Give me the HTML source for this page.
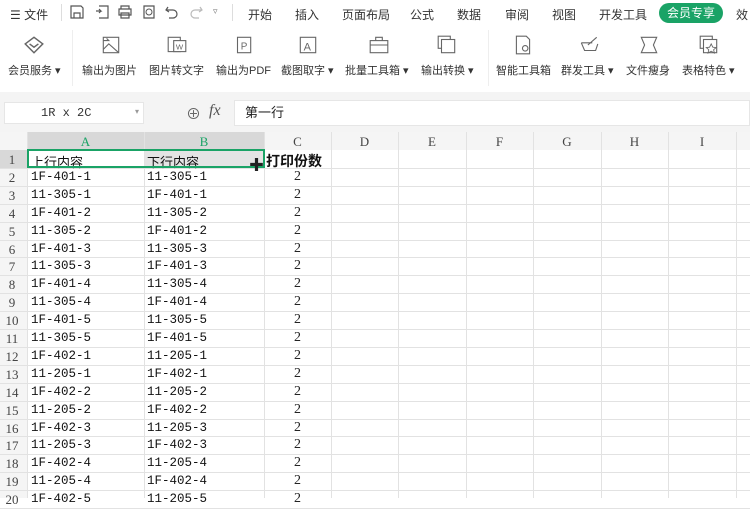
<!DOCTYPE html><html><head><meta charset="utf-8"><style>
*{margin:0;padding:0;box-sizing:border-box}
body{width:750px;height:498px;overflow:hidden;background:#fff;font-family:"Liberation Sans","Noto Sans CJK SC",sans-serif;position:relative;color:#333}
.a{position:absolute;white-space:nowrap}
.m{font-size:12px;top:6px;color:#333}
.t{font-size:11px;top:62px;color:#333}
.ic{position:absolute;top:34px;width:22px;height:22px}
.cell{font-family:"Liberation Mono","Noto Sans CJK SC",monospace;font-size:12.5px;color:#111}
.cz{font-family:"Liberation Sans","Noto Sans CJK SC",sans-serif;font-size:13px;color:#111}
.rn{font-family:"Liberation Serif",serif;font-size:13px;color:#444;width:24px;text-align:center;left:0}
.vl{position:absolute;top:132px;bottom:0;width:1px;background:#e2e2e2}
.hl{position:absolute;left:0;width:750px;height:1px;background:#e2e2e2}
.ch{position:absolute;top:134px;font-family:"Liberation Serif",serif;font-size:13px;color:#444;text-align:center}
.qa{position:absolute;top:4px;width:16px;height:16px}
</style></head><body>
<div class="a m" style="left:10px">☰ 文件</div>
<div class="a" style="left:61px;top:4px;width:1px;height:17px;background:#ddd"></div>
<svg class="qa" style="left:69px" viewBox="0 0 16 16"><path d="M2 2h10l2 2v10H2z M5 14V9h6v5" fill="none" stroke="#555" stroke-width="1.2"/></svg>
<svg class="qa" style="left:94px" viewBox="0 0 16 16"><path d="M5 2h9v12H5M2 7h5l-2-2M7 7l-2 2" fill="none" stroke="#555" stroke-width="1.2"/></svg>
<svg class="qa" style="left:117px" viewBox="0 0 16 16"><path d="M4 5V2h8v3M2 5h12v6H2zM4 9h8v5H4z" fill="none" stroke="#555" stroke-width="1.2"/></svg>
<svg class="qa" style="left:141px" viewBox="0 0 16 16"><path d="M3 2h10v12H3z" fill="none" stroke="#555" stroke-width="1.2"/><circle cx="8" cy="8" r="3" fill="none" stroke="#555"/></svg>
<svg class="qa" style="left:164px" viewBox="0 0 16 16"><path d="M4 3L2 6l3 2M2 6h7a4 4 0 010 8H5" fill="none" stroke="#555" stroke-width="1.2"/></svg>
<svg class="qa" style="left:188px" viewBox="0 0 16 16"><path d="M12 3l2 3-3 2M14 6H7a4 4 0 000 8h4" fill="none" stroke="#bbb" stroke-width="1.2"/></svg>
<div class="a" style="left:213px;top:6px;font-size:9px;color:#777">▿</div>
<div class="a" style="left:232px;top:4px;width:1px;height:17px;background:#ddd"></div>
<div class="a m" style="left:248px">开始</div><div class="a m" style="left:295px">插入</div><div class="a m" style="left:342px">页面布局</div><div class="a m" style="left:410px">公式</div><div class="a m" style="left:457px">数据</div><div class="a m" style="left:505px">审阅</div><div class="a m" style="left:552px">视图</div><div class="a m" style="left:599px">开发工具</div>
<div class="a" style="left:659px;top:3px;width:64px;height:20px;border-radius:10px;background:#1aa366;color:#fff;font-size:12px;text-align:center;line-height:20px">会员专享</div>
<div class="a m" style="left:736px">效</div>
<svg class="ic" style="left:23px" viewBox="0 0 20 20"><path d="M2 9l8-6 8 6-8 8z" fill="none" stroke="#666" stroke-width="1.3"/><path d="M6 9l4 3 4-3" fill="none" stroke="#666" stroke-width="1.3"/></svg>
<div class="a" style="left:72px;top:30px;width:1px;height:56px;background:#eee"></div>
<svg class="ic" style="left:100px" viewBox="0 0 20 20"><rect x="3" y="3" width="14" height="14" fill="none" stroke="#666"/><path d="M3 14l5-5 9 8M3 6h5l-2-2" fill="none" stroke="#666"/></svg>
<svg class="ic" style="left:166px" viewBox="0 0 20 20"><rect x="2" y="3" width="11" height="13" fill="none" stroke="#666"/><rect x="7" y="6" width="11" height="10" fill="#fff" stroke="#666"/><text x="9" y="14" font-size="7" fill="#666">W</text></svg>
<svg class="ic" style="left:232px" viewBox="0 0 20 20"><rect x="5" y="3" width="12" height="14" fill="none" stroke="#666"/><text x="8" y="14" font-size="9" fill="#666">P</text></svg>
<svg class="ic" style="left:297px" viewBox="0 0 20 20"><rect x="3" y="3" width="14" height="14" fill="none" stroke="#666"/><text x="6" y="15" font-size="10" fill="#666">A</text></svg>
<svg class="ic" style="left:368px" viewBox="0 0 20 20"><rect x="2" y="6" width="16" height="11" fill="none" stroke="#666"/><path d="M7 6V3h6v3M2 10h16" fill="none" stroke="#666"/></svg>
<svg class="ic" style="left:436px" viewBox="0 0 20 20"><rect x="2" y="2" width="11" height="11" fill="none" stroke="#666"/><rect x="5" y="5" width="12" height="12" fill="#fff" stroke="#666"/></svg>
<div class="a" style="left:488px;top:30px;width:1px;height:56px;background:#eee"></div>
<svg class="ic" style="left:512px" viewBox="0 0 20 20"><path d="M4 2h9l3 3v13H4z" fill="none" stroke="#666"/><circle cx="12" cy="13" r="2.5" fill="none" stroke="#666"/></svg>
<svg class="ic" style="left:578px" viewBox="0 0 20 20"><path d="M3 8h10M3 8l3 7h10l2-6M9 10l8-7" fill="none" stroke="#666"/></svg>
<svg class="ic" style="left:638px" viewBox="0 0 20 20"><path d="M3 3h14l-3 7 3 7H3l3-7z" fill="none" stroke="#666"/></svg>
<svg class="ic" style="left:698px" viewBox="0 0 20 20"><rect x="2" y="2" width="11" height="11" fill="none" stroke="#666"/><rect x="5" y="5" width="12" height="12" fill="#fff" stroke="#666"/><path d="M12 9l1.5 3 3 .3-2.3 2 .7 3-2.9-1.6-2.9 1.6.7-3-2.3-2 3-.3z" fill="none" stroke="#666" stroke-width=".8"/></svg>
<div class="a t" style="left:8px">会员服务 ▾</div><div class="a t" style="left:82px">输出为图片</div><div class="a t" style="left:149px">图片转文字</div><div class="a t" style="left:216px">输出为PDF</div><div class="a t" style="left:281px">截图取字 ▾</div><div class="a t" style="left:345px">批量工具箱 ▾</div><div class="a t" style="left:421px">输出转换 ▾</div><div class="a t" style="left:496px">智能工具箱</div><div class="a t" style="left:561px">群发工具 ▾</div><div class="a t" style="left:626px">文件瘦身</div><div class="a t" style="left:682px">表格特色 ▾</div>
<div class="a" style="left:0;top:92px;width:750px;height:40px;background:#f4f4f4"></div>
<div class="a" style="left:4px;top:102px;width:140px;height:22px;background:#fff;border:1px solid #e6e6e6;font-family:'Liberation Mono',monospace;font-size:12px;line-height:20px;padding-left:36px;color:#333">1R x 2C<span style="position:absolute;right:4px;font-size:8px;color:#999">▾</span></div>
<div class="a" style="left:186px;top:103px;font-size:15px;color:#666">⊕</div>
<div class="a" style="left:209px;top:102px;font-family:'Liberation Serif',serif;font-style:italic;font-size:16px;color:#555">fx</div>
<div class="a" style="left:234px;top:100px;width:516px;height:26px;background:#fff;border:1px solid #e6e6e6;font-size:13px;line-height:24px;padding-left:10px;color:#222">第一行</div>
<div class="a" style="left:0;top:132px;width:750px;height:18px;background:#f5f5f5"></div>
<div class="a" style="left:27px;top:132px;width:237px;height:18px;background:#d8d8d8"></div>
<div class="a" style="left:0;top:150px;width:27px;height:348px;background:#f5f5f5"></div>
<div class="a" style="left:0;top:150px;width:27px;height:18px;background:#d8d8d8"></div>
<div class="a" style="left:144px;top:150px;width:120px;height:18px;background:#e4e4e4"></div>
<div class="vl" style="left:27px"></div><div class="vl" style="left:144px"></div><div class="vl" style="left:264px"></div><div class="vl" style="left:331px"></div><div class="vl" style="left:398px"></div><div class="vl" style="left:466px"></div><div class="vl" style="left:533px"></div><div class="vl" style="left:601px"></div><div class="vl" style="left:668px"></div><div class="vl" style="left:736px"></div>
<div class="ch" style="left:27px;width:117px;color:#1aa366">A</div><div class="ch" style="left:144px;width:120px;color:#1aa366">B</div><div class="ch" style="left:264px;width:67px">C</div><div class="ch" style="left:331px;width:67px">D</div><div class="ch" style="left:398px;width:68px">E</div><div class="ch" style="left:466px;width:67px">F</div><div class="ch" style="left:533px;width:68px">G</div><div class="ch" style="left:601px;width:67px">H</div><div class="ch" style="left:668px;width:68px">I</div>
<div id="g"></div>
<div class="a" style="left:27px;top:149px;width:238px;height:19px;border:2px solid #1aa366"></div>
<div class="a" style="left:249px;top:154px;font-size:15px;font-weight:bold;color:#222">✚</div>
<script>
var d=[["上行内容","下行内容"],["1F-401-1","11-305-1"],["11-305-1","1F-401-1"],["1F-401-2","11-305-2"],["11-305-2","1F-401-2"],["1F-401-3","11-305-3"],["11-305-3","1F-401-3"],["1F-401-4","11-305-4"],["11-305-4","1F-401-4"],["1F-401-5","11-305-5"],["11-305-5","1F-401-5"],["1F-402-1","11-205-1"],["11-205-1","1F-402-1"],["1F-402-2","11-205-2"],["11-205-2","1F-402-2"],["1F-402-3","11-205-3"],["11-205-3","1F-402-3"],["1F-402-4","11-205-4"],["11-205-4","1F-402-4"],["1F-402-5","11-205-5"]];
var h="";for(var i=0;i<d.length;i++){var t=150+i*17.9;var y=(t+2).toFixed(1);h+='<div class="hl" style="top:'+(t+17.9).toFixed(1)+'px"></div>';
h+='<div class="a rn" style="top:'+y+'px">'+(i+1)+'</div>';
var c=i==0?'cz':'cell';
h+='<div class="a '+c+'" style="left:31px;top:'+y+'px">'+d[i][0]+'</div>';
h+='<div class="a '+c+'" style="left:147px;top:'+y+'px">'+d[i][1]+'</div>';
if(i==0)h+='<div class="a" style="left:266px;top:'+(t+0.5).toFixed(1)+'px;font-size:14px;font-weight:bold;color:#111">打印份数</div>';
else h+='<div class="a" style="left:264px;width:67px;text-align:center;font-family:Liberation Serif,serif;font-size:14px;color:#222;top:'+(t+1).toFixed(1)+'px">2</div>';}
document.getElementById("g").innerHTML=h;
</script>
</body></html>
